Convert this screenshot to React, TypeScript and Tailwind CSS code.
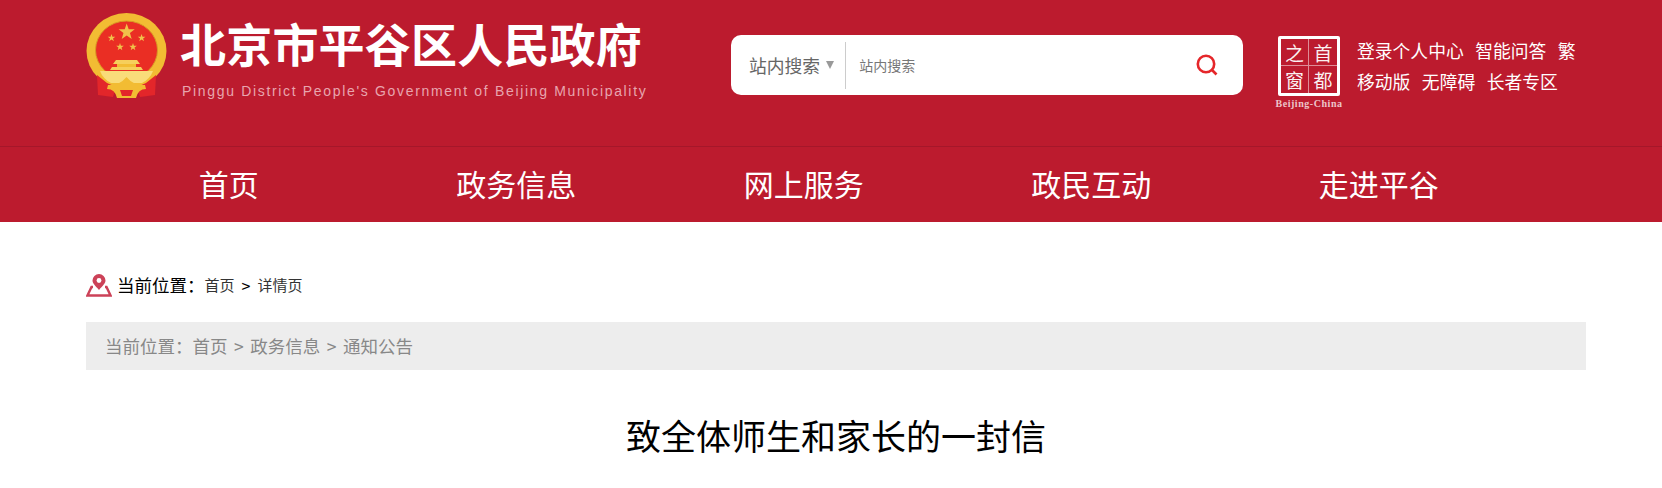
const NAV_ITEMS = ["首页", "政务信息", "网上服务", "政民互动", "走进平谷"];
const FONT = "font-['Noto_Sans_CJK_SC','Liberation_Sans',sans-serif]";

function Star({ x, y, r }: { x: number; y: number; r: number }) {
  const points = Array.from({ length: 10 }, (_, i) => {
    const radius = i % 2 === 0 ? r : r * 0.4;
    const angle = (Math.PI / 5) * i - Math.PI / 2;
    return `${x + radius * Math.cos(angle)},${y + radius * Math.sin(angle)}`;
  }).join(" ");
  return <polygon points={points} fill="#f0c24a" />;
}

function Emblem() {
  return (
    <svg width="81" height="86" viewBox="0 0 81 86" className="shrink-0">
      <ellipse cx="40.5" cy="38" rx="40" ry="38" fill="#f2bc33" />
      <ellipse cx="40.5" cy="37" rx="31" ry="29" fill="#ea2e24" stroke="#d99a25" strokeWidth="1" />
      <Star x={40.7} y={19} r={8.5} />
      <Star x={25.5} y={25} r={4} />
      <Star x={55.6} y={25} r={4} />
      <Star x={34} y={34} r={4} />
      <Star x={47} y={34} r={4} />
      <path d="M30 47 H51 L54 51 H27 Z" fill="#f6cf5b" />
      <rect x="31" y="51" width="19" height="3" fill="#f2bc33" />
      <path d="M26 54 H55 L57 57 H24 Z" fill="#f6cf5b" />
      <path d="M14 58 H67 Q64 66 56 70 H25 Q17 66 14 58 Z" fill="#f9dc7a" />
      <path d="M11 62 L21 70 L30 74 L27 84 L12 82 Z" fill="#e3262a" />
      <path d="M70 62 L60 70 L51 74 L54 84 L69 82 Z" fill="#e3262a" />
      <path d="M22 72 Q33 73 40.5 64 Q48 73 59 72 L60 76 Q52 76 50 85 H31 Q29 76 21 76 Z" fill="#f2bc33" />
      <path d="M34 77 H47 L45 83 H36 Z" fill="#e3262a" />
    </svg>
  );
}

function CapitalSeal() {
  return (
    <div className="w-[62px] shrink-0 flex flex-col items-center">
      <div className="w-[62px] h-[60px] border-[3px] border-white rounded-[2px] grid grid-cols-2 grid-rows-2 text-white/95 text-[19px] leading-none">
        <span className="flex items-center justify-center border-r border-b border-white/50">之</span>
        <span className="flex items-center justify-center border-b border-white/50">首</span>
        <span className="flex items-center justify-center border-r border-white/50">窗</span>
        <span className="flex items-center justify-center">都</span>
      </div>
      <span className="text-white/75 text-[10px] leading-[10px] mt-[3px] font-bold tracking-[0.55px] whitespace-nowrap font-['Liberation_Serif',serif]">
        Beijing-China
      </span>
    </div>
  );
}

function SearchGlyph() {
  return (
    <svg width="22" height="22" viewBox="0 0 22 22" className="shrink-0" fill="none" stroke="#e5262a" strokeWidth="2.6">
      <circle cx="10" cy="10" r="8.2" />
      <path d="M16 16 L20.5 20.5" />
    </svg>
  );
}

function LocationIcon() {
  return (
    <svg width="26" height="23" viewBox="0 0 26 23" className="shrink-0">
      <path
        d="M13 16 C9 11.5 6.5 9.5 6.5 6.6 A6.5 6.5 0 0 1 19.5 6.6 C19.5 9.5 17 11.5 13 16 Z"
        fill="#cc4258"
      />
      <circle cx="13" cy="6.5" r="2.4" fill="#fff" />
      <path d="M7 13 H5.5 L1.5 21.5 H24.5 L20.5 13 H19" fill="none" stroke="#cc4258" strokeWidth="2.4" />
    </svg>
  );
}

export default function App() {
  return (
    <div className={`w-[1662px] h-[488px] overflow-hidden bg-white ${FONT}`}>
      <header className="bg-[#bc1b2e]">
        {/* Top band */}
        <div className="h-[147px] pl-[86px] flex items-start border-b border-[#a5172a]">
          <div className="flex items-start pt-[13px] w-[645px]">
            <Emblem />
            <div className="ml-[13px]">
              <h1 className="text-[46px] leading-[60px] -mt-[1px] font-bold text-white whitespace-nowrap tracking-[0.2px]">
                北京市平谷区人民政府
              </h1>
              <p className="ml-[2px] mt-[10px] text-[14px] leading-[18px] text-[#e8a5ae] tracking-[1.67px] whitespace-nowrap font-['Liberation_Sans',sans-serif]">
                Pinggu District People's Government of Beijing Municipality
              </p>
            </div>
          </div>

          <div className="mt-[35px] w-[512px] h-[60px] bg-white rounded-[10px] flex items-center">
            <span className="ml-[18px] text-[17.8px] text-[#666] whitespace-nowrap">站内搜索</span>
            <span className="ml-[6px] w-0 h-0 border-x-[4.5px] border-x-transparent border-t-[8px] border-t-[#999]" />
            <span className="ml-[11px] w-px h-[47px] bg-[#ccc]" />
            <span className="ml-[13px] flex-1 text-[14px] text-[#777]">站内搜索</span>
            <span className="mr-[25px]">
              <SearchGlyph />
            </span>
          </div>

          <div className="ml-[35px] mt-[36px]">
            <CapitalSeal />
          </div>

          <div className="ml-[17px] mt-[35px] text-white text-[17.8px] leading-[31px] whitespace-nowrap">
            <div className="flex gap-[11.5px]">
              <span>登录个人中心</span>
              <span>智能问答</span>
              <span>繁</span>
            </div>
            <div className="flex gap-[11.5px]">
              <span>移动版</span>
              <span>无障碍</span>
              <span>长者专区</span>
            </div>
          </div>
        </div>

        {/* Main nav */}
        <nav className="h-[75px] pl-[85px] pb-[2px] flex items-center">
          {NAV_ITEMS.map((item) => (
            <a key={item} className="w-[287.5px] text-center text-white text-[30px]">
              {item}
            </a>
          ))}
        </nav>
      </header>

      <main className="px-[86px]">
        <div className="mt-[50px] h-[26px] flex items-center text-black">
          <LocationIcon />
          <span className="ml-[5px] text-[17.5px]">当前位置：</span>
          <span className="text-[15px] text-[#333]">首页</span>
          <span className="mx-[7px] text-[16px]">&gt;</span>
          <span className="text-[15px] text-[#333]">详情页</span>
        </div>

        <div className="mt-[24px] w-[1500px] h-[48px] bg-[#ededed] pl-[19px] flex items-center gap-[6.5px] text-[17.5px] text-[#888]">
          <span>当前位置：首页</span>
          <span>&gt;</span>
          <span>政务信息</span>
          <span>&gt;</span>
          <span>通知公告</span>
        </div>

        <h2 className="mt-[38px] w-[1500px] text-center text-[35px] leading-[54px] text-black">
          致全体师生和家长的一封信
        </h2>
      </main>
    </div>
  );
}
